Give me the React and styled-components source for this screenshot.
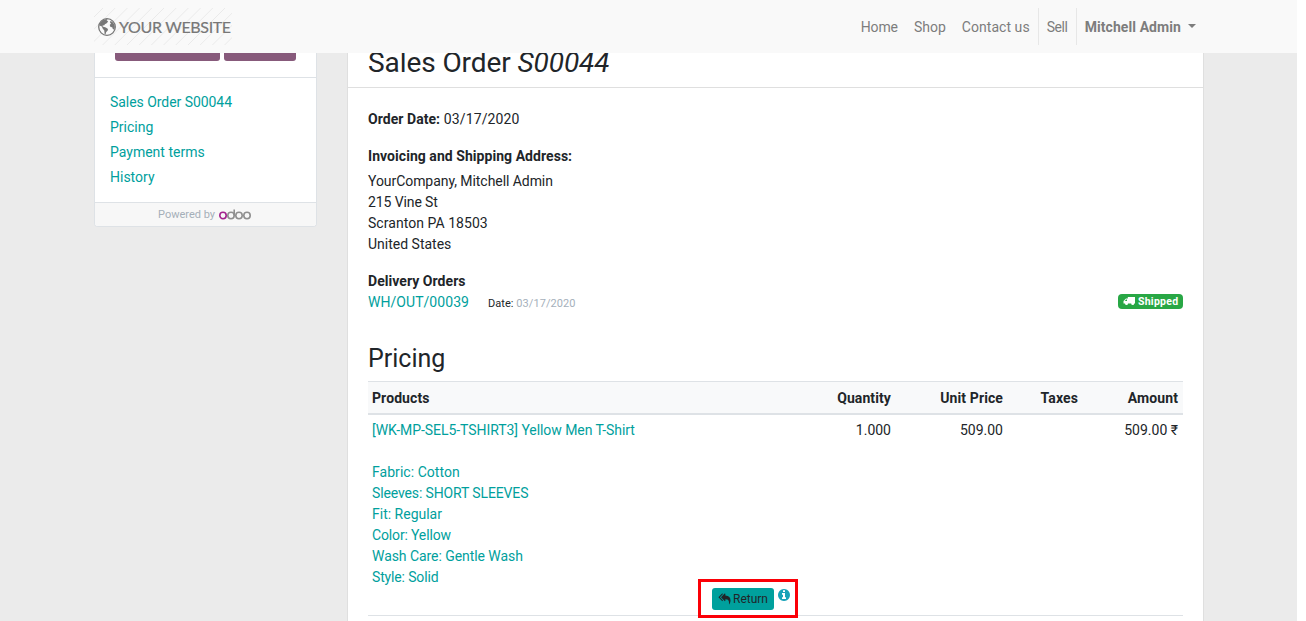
import React from 'react';
import styled, { createGlobalStyle } from 'styled-components';

const Global = createGlobalStyle`
  * { box-sizing: border-box; }
  body { margin: 0; background: #fff; font: 14px/21px Roboto, "Noto Sans", sans-serif; color: #212529; overflow: hidden; }
  #root { height: 621px; overflow: hidden; }
`;
const Page = styled.div`width: 1297px; height: 621px; background: #ebebeb; overflow: hidden; display: flex; flex-direction: column;`;
const Header = styled.header`flex: none; height: 53px; background: #f9f9f9; display: flex; justify-content: space-between; align-items: center; padding: 0 93px 0 94px; position: relative; z-index: 1;`;
const Brand = styled.a`position: relative; display: flex; align-items: center; width: 138px; height: 37px; padding-left: 4px;`;
const Hatch = styled.svg`position: absolute; left: 0; top: 0; width: 138px; height: 37px;`;
const BrandName = styled.span`position: relative; margin-left: 3px; font: 400 16px/20px Lato, sans-serif; letter-spacing: -.34px; color: #777; white-space: nowrap; -webkit-text-stroke: .2px #777;`;
const Nav = styled.nav`display: flex; align-items: center; height: 37px; color: #7d7d7d;`;
const NavItem = styled.a`
  display: flex; align-items: center; height: 37px; padding: 2px 8px 0 8px; letter-spacing: ${p => p.$ls || 0}px;
  border-left: ${p => (p.$divided ? '1px solid #e7e7e7' : '0')}; font-weight: ${p => (p.$bold ? 700 : 400)};
`;
const Caret = styled.span`margin-left: 7px; margin-top: -3px; border: 4px solid transparent; border-top-color: #7d7d7d; border-bottom: 0;`;
const Body = styled.div`flex: 1; min-height: 0; display: flex; align-items: flex-start; gap: 30px; padding-left: 94px;`;
const Sidebar = styled.aside`width: 223px; background: #fff; border: 1px solid #dee2e6; border-top: 0; border-radius: 0 0 4px 4px; overflow: hidden;`;
const Actions = styled.div`display: flex; gap: 4px; height: 25px; padding-left: 20px; border-bottom: 1px solid #dee2e6;`;
const ActionStub = styled.div`height: 8px; width: ${p => p.$w}px; background: #875a7b; border-radius: 0 0 3px 3px;`;
const Menu = styled.nav`height: 124px; padding: 12px 15px; display: flex; flex-direction: column;`;
const Link = styled.a`color: #00a09d; letter-spacing: ${p => p.$ls || 0}px;`;
const MenuLink = styled(Link)`height: 25px; line-height: 25px;`;
const Powered = styled.div`height: 24px; display: flex; align-items: center; justify-content: center; gap: 4px; padding-right: 2px; border-top: 1px solid #dee2e6; background: #f7f7f7; color: #a5afb9; font-size: 11px; line-height: 22px;`;
const Main = styled.main`width: 857px; height: 568px; background: #fff; border: solid #dfdfdf; border-width: 0 1px;`;
const TitleBar = styled.div`display: flex; align-items: flex-start; height: 35px; padding-left: 20px; border-bottom: 1px solid #dfdfdf;`;
const Title = styled.h2`margin: -7px 0 0; font-size: 28px; line-height: 34px; font-weight: 400; letter-spacing: -.08px;`;
const Content = styled.div`padding: 21px 20px 0;`;
const Para = styled.div`margin-bottom: ${p => p.$mb}px; letter-spacing: ${p => p.$ls || 0}px;`;
const Bold = styled.b`font-weight: 700; letter-spacing: .05px;`;
const Delivery = styled.div`display: flex; align-items: center; height: 21px;`;
const Small = styled.span`margin-left: 19px; font-size: 11px; padding-top: 2px; letter-spacing: .06px;`;
const Muted = styled.span`color: #a5b0bb;`;
const Badge = styled.span`margin-left: auto; margin-top: -3px; display: flex; align-items: center; gap: 3px; width: 65px; height: 15px; padding-left: 5px; border-radius: 4px; background: #28a745; color: #fff; font-weight: 700; font-size: 10.5px; line-height: 15px; letter-spacing: .26px;`;
const SectionTitle = styled.h3`margin: 31px 0 7px; font-size: 25px; line-height: 30px; font-weight: 400;`;
const Grid = styled.div`display: grid; grid-template-columns: 399px 120px 112px 75px 1fr; padding: 0 5px 0 4px; text-align: right; > :first-child { text-align: left; }`;
const HeadRow = styled(Grid)`height: 34px; border-top: 1px solid #dee2e6; border-bottom: 2px solid #dee2e6; background: #f8f9fa; line-height: 33px; font-weight: 700; letter-spacing: .1px;`;
const Row = styled(Grid)`height: 201px; padding-top: 5px; border-bottom: 1px solid #dee2e6; position: relative;`;
const Highlight = styled.div`position: absolute; left: 330px; top: 164px; width: 100px; height: 39px; border: 3px solid #fb0007; display: flex; padding: 6px 0 0 11px; gap: 4px;`;
const ReturnButton = styled.button`display: flex; align-items: center; justify-content: center; gap: 2px; width: 62px; height: 22px; padding: 0; border: 0; border-radius: 3px; background: #00a09d; color: #212529; font: 12px/18px Roboto, sans-serif;`;
const Info = styled.svg`width: 12px; height: 12px; margin-top: 1px; color: #17a2b8;`;
const Icon = styled.svg`width: ${p => p.$w}px; height: ${p => p.$h}px; flex: none; position: relative;`;
const Spec = styled.span`display: block; letter-spacing: ${p => p.$ls}px;`;

const menu = ['Sales Order S00044', 'Pricing', 'Payment terms', 'History'];
const specs = [
  ['Fabric: Cotton', 0.04], ['Sleeves: SHORT SLEEVES', -0.13], ['Fit: Regular', 0],
  ['Color: Yellow', -0.15], ['Wash Care: Gentle Wash', -0.06], ['Style: Solid', -0.15],
];

function SiteLogo() {
  return (
    <Brand>
      <Hatch viewBox="0 0 138 37" stroke="#e6e6e6" strokeWidth=".8">
        {Array.from({ length: 15 }, (_, i) => <path key={i} d={`M${i * 12.2 - 29} 38L${i * 12.2 + 9} 0`} />)}
      </Hatch>
      <Icon $w={18} $h={18} viewBox="0 0 18 18">
        <circle cx="9" cy="9" r="8.3" fill="#fafafa" stroke="#777" strokeWidth="1.3" />
        <path fill="#777" d="M1.500 6 4 2.500 8.500 1l1.300 1-1.300.6 1.700 1-1.500 1.600-1.800 1-.8 1.400-1.300-.3-.2 1.300 1.500.5 1.700.4 2.200 1.500-.4 1.700-1.400 1.200-.6 2.300-1-.2-.3-3.500-1.500-1.700-1-2.400L1.500 7.500z" />
        <path fill="#777" d="m12.300 3 2 .8 1.900 2.400.7 2.900-.7 2.700-1.400-.8-.6-1.800-1.700-.2-.8-1.900 1.300-1.600-1-1z" />
      </Icon>
      <BrandName>YOUR WEBSITE</BrandName>
    </Brand>
  );
}

function OdooLogo() {
  return (
    <Icon $w={32} $h={12} viewBox="0 0 32 12" fill="none" strokeWidth="1.6">
      <circle cx="4" cy="6.500" r="3.200" stroke="#a3238e" />
      <g stroke="#8f8f8f"><circle cx="12" cy="6.500" r="3.200" /><path d="M15.200 6.500V.5" /><circle cx="20" cy="6.500" r="3.200" /><circle cx="28" cy="6.500" r="3.200" /></g>
    </Icon>
  );
}

export default function App() {
  return (
    <><Global />
      <Page>
        <Header>
          <SiteLogo />
          <Nav>
            <NavItem $ls={-0.1}>Home</NavItem><NavItem>Shop</NavItem><NavItem $ls={0.05}>Contact us</NavItem>
            <NavItem $divided $ls={-0.4}>Sell</NavItem><NavItem $divided $bold $ls={0.08}>Mitchell Admin<Caret /></NavItem>
          </Nav>
        </Header>
        <Body>
          <Sidebar>
            <Actions><ActionStub $w={105} /><ActionStub $w={72} /></Actions>
            <Menu>{menu.map((m, i) => <MenuLink key={m} $ls={i === 0 ? -0.05 : 0}>{m}</MenuLink>)}</Menu>
            <Powered>Powered by <OdooLogo /></Powered>
          </Sidebar>
          <Main>
            <TitleBar><Title>Sales Order <em>S00044</em></Title></TitleBar>
            <Content>
              <Para $mb={16} $ls={0.14}><Bold>Order Date:</Bold> 03/17/2020</Para>
              <Para $mb={4}><Bold>Invoicing and Shipping Address:</Bold></Para>
              <Para $mb={16}><Spec $ls={-0.06}>YourCompany, Mitchell Admin</Spec><Spec $ls={-0.1}>215 Vine St</Spec><Spec $ls={0.05}>Scranton PA 18503</Spec>United States</Para>
              <Para $mb={0}><Bold>Delivery Orders</Bold></Para>
              <Delivery>
                <Link $ls={0.05}>WH/OUT/00039</Link>
                <Small>Date: <Muted>03/17/2020</Muted></Small>
                <Badge>
                  <Icon $w={12} $h={10} viewBox="0 0 12 10" fill="#fff"><path fillRule="evenodd" d="M4.800 1H12v6.500h-.8a1.500 1.500 0 0 1-3 0H5a1.500 1.500 0 0 1-3 0H.5V5L3 2.500h1.800zM1.700 5H4V3.500h-.7z" /></Icon>
                  Shipped
                </Badge>
              </Delivery>
              <SectionTitle>Pricing</SectionTitle>
              <HeadRow><span>Products</span><span>Quantity</span><span>Unit Price</span><span>Taxes</span><span>Amount</span></HeadRow>
              <Row>
                <Link $ls={-0.06}>[WK-MP-SEL5-TSHIRT3] Yellow Men T-Shirt<br /><br />{specs.map(([text, ls]) => <Spec key={text} $ls={ls}>{text}</Spec>)}</Link>
                <span>1.000</span><span>509.00</span><span /><span>509.00 ₹</span>
                <Highlight>
                  <ReturnButton>
                    <Icon $w={13} $h={12} viewBox="0 0 1792 1792" fill="currentColor"><path d="M640 1082v70q0 42-39 59-13 5-25 5-27 0-45-19L19 685q-19-19-19-45t19-45L531 83q29-31 70-14 39 17 39 59v69L243 595q-19 19-19 45t19 45zm1152 58q0 58-17 133.500t-38.500 138-48 125-40.500 90.500l-20 40q-8 17-28 17-6 0-9-1-25-8-23-34 43-400-106-565-64-71-170.500-110.500T1024 923v229q0 42-39 59-13 5-25 5-27 0-45-19L403 685q-19-19-19-45t19-45L915 83q29-31 70-14 39 17 39 59v262q411 28 599 221 169 173 169 509z" /></Icon>
                    Return
                  </ReturnButton>
                  <Info viewBox="0 0 1536 1536" fill="currentColor"><path d="M1024 1248v-160q0-14-9-23t-23-9h-96V544q0-14-9-23t-23-9H544q-14 0-23 9t-9 23v160q0 14 9 23t23 9h96v320h-96q-14 0-23 9t-9 23v160q0 14 9 23t23 9h448q14 0 23-9t9-23zM896 352V192q0-14-9-23t-23-9H672q-14 0-23 9t-9 23v160q0 14 9 23t23 9h192q14 0 23-9t9-23zm640 416q0 209-103 385.500T1153.500 1433 768 1536t-385.500-103T103 1153.500 0 768t103-385.500T382.500 103 768 0t385.500 103T1433 382.500 1536 768z" /></Info>
                </Highlight>
              </Row>
            </Content>
          </Main>
        </Body>
      </Page>
    </>
  );
}
